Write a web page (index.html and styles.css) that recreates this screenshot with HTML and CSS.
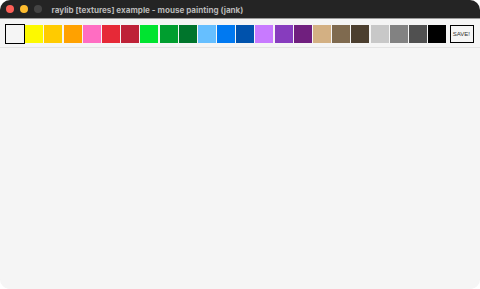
FILE: index.html
```html
<!DOCTYPE html>
<html>
<head>
<meta charset="utf-8">
<link rel="stylesheet" href="styles.css">
</head>
<body>
<div class="window">
  <div class="titlebar">
    <div class="lights">
      <span class="light red"></span>
      <span class="light yellow"></span>
      <span class="light gray"></span>
    </div>
    <div class="title">raylib [textures] example - mouse painting (jank)</div>
  </div>
  <div class="content">
    <div class="toolbar">
      <div class="swatches">
        <div class="swatch selected c0"></div>
        <div class="swatch c1"></div>
        <div class="swatch c2"></div>
        <div class="swatch c3"></div>
        <div class="swatch c4"></div>
        <div class="swatch c5"></div>
        <div class="swatch c6"></div>
        <div class="swatch c7"></div>
        <div class="swatch c8"></div>
        <div class="swatch c9"></div>
        <div class="swatch c10"></div>
        <div class="swatch c11"></div>
        <div class="swatch c12"></div>
        <div class="swatch c13"></div>
        <div class="swatch c14"></div>
        <div class="swatch c15"></div>
        <div class="swatch c16"></div>
        <div class="swatch c17"></div>
        <div class="swatch c18"></div>
        <div class="swatch c19"></div>
        <div class="swatch c20"></div>
        <div class="swatch c21"></div>
        <div class="swatch c22"></div>
      </div>
      <div class="save">SAVE!</div>
    </div>
    <div class="canvas"></div>
  </div>
</div>
</body>
</html>
```

FILE: styles.css
```css
html, body {
  margin: 0;
  padding: 0;
  background: #ffffff;
}
.window {
  width: 480px;
  height: 289px;
  border-radius: 10px;
  overflow: hidden;
  display: flex;
  flex-direction: column;
  background: #f5f5f5;
}
.titlebar {
  height: 19px;
  flex: none;
  background: #242424;
  border-bottom: 1px solid #9a9a9a;
  box-sizing: border-box;
  display: flex;
  align-items: center;
}
.lights {
  display: flex;
  gap: 6px;
  padding-left: 5.5px;
}
.light {
  width: 8px;
  height: 8px;
  border-radius: 50%;
  display: block;
}
.light.red { background: #fe5f57; }
.light.yellow { background: #febc2e; }
.light.gray { background: #444444; }
.title {
  margin-left: 10px;
  font-family: "Inter", "Open Sans", sans-serif;
  font-weight: 700;
  font-size: 8.1px;
  color: #b8b8b8;
  white-space: nowrap;
  padding-top: 1px;
}
.content {
  flex: 1;
  display: flex;
  flex-direction: column;
}
.toolbar {
  height: 29px;
  flex: none;
  border-bottom: 1px solid #e4e4e4;
  box-sizing: border-box;
  display: flex;
  align-items: flex-start;
  padding-top: 6px;
  padding-left: 6px;
}
.swatches {
  display: flex;
  gap: 1.2px;
}
.swatch {
  width: 18px;
  height: 18px;
  box-sizing: border-box;
}
.swatch.selected {
  outline: 1.4px solid #000;
  outline-offset: 0.8px;
}
.save {
  margin-left: 3.6px;
  width: 24px;
  height: 18px;
  box-sizing: border-box;
  border: 1.4px solid #000;
  font-family: "Liberation Sans", sans-serif;
  font-size: 6px;
  color: #333;
  line-height: 1;
  padding-top: 5px;
  padding-left: 2px;
  white-space: nowrap;
}
.canvas {
  flex: 1;
  background: #f5f5f5;
}
.c0 { background: rgb(245,245,245); }
.c1 { background: rgb(253,249,0); }
.c2 { background: rgb(255,203,0); }
.c3 { background: rgb(255,161,0); }
.c4 { background: rgb(255,109,194); }
.c5 { background: rgb(230,41,55); }
.c6 { background: rgb(190,33,55); }
.c7 { background: rgb(0,228,48); }
.c8 { background: rgb(0,158,47); }
.c9 { background: rgb(0,117,44); }
.c10 { background: rgb(102,191,255); }
.c11 { background: rgb(0,121,241); }
.c12 { background: rgb(0,82,172); }
.c13 { background: rgb(200,122,255); }
.c14 { background: rgb(135,60,190); }
.c15 { background: rgb(112,31,126); }
.c16 { background: rgb(211,176,131); }
.c17 { background: rgb(127,106,79); }
.c18 { background: rgb(76,63,47); }
.c19 { background: rgb(200,200,200); }
.c20 { background: rgb(130,130,130); }
.c21 { background: rgb(80,80,80); }
.c22 { background: rgb(0,0,0); }
```
